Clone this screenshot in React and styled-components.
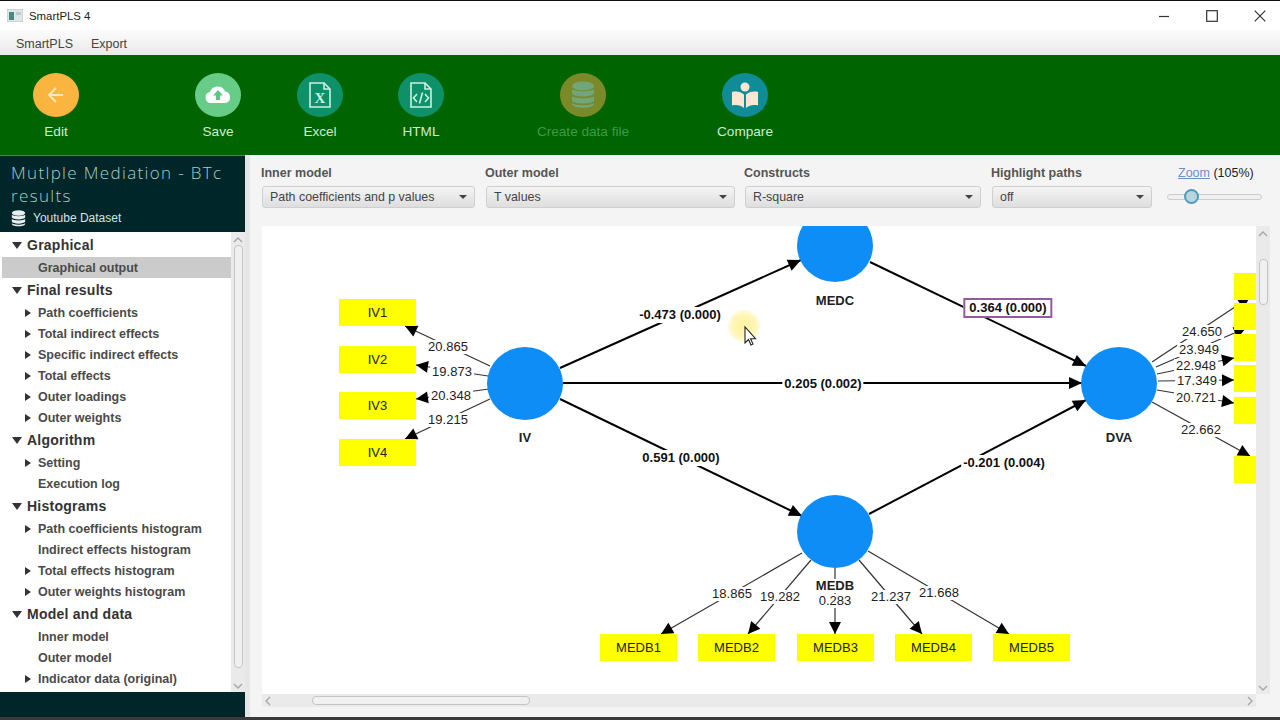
import React from 'react';
import styled, { createGlobalStyle } from 'styled-components';

const Global = createGlobalStyle`
  html, body { margin: 0; padding: 0; background: #f4f4f4; }
  body { font-family: "Liberation Sans", Arial, sans-serif; overflow: hidden; }
  * { box-sizing: border-box; }
`;

const Page = styled.div`
  width: 1280px; height: 720px; display: flex; flex-direction: column;
  border-top: 1px solid #111; overflow: hidden; background: #f4f4f4;
`;
const TitleBar = styled.div`
  height: 29px; flex: none; background: #fff; display: flex; align-items: center;
  padding-left: 7px; font-size: 11.4px; color: #222;
`;
const AppIcon = styled.svg`width: 16px; height: 13px; margin-right: 6px;`;
const TitleText = styled.span`flex: 1;`;
const WinButton = styled.button`
  width: ${p => p.$w || 48}px; height: 29px; border: 0; background: none; padding: 0 0 0 ${p => p.$pl || 0}px;
  display: flex; align-items: center; justify-content: center; color: #333;
`;
const MenuBar = styled.div`
  height: 25px; flex: none; display: flex; align-items: center; gap: 18px; padding: 2px 0 0 16px;
  font-size: 12.5px; color: #444;
  background: linear-gradient(#fcfcfc, #e9e9e9);
`;
const Toolbar = styled.div`
  height: 100px; flex: none; background: #006400; display: flex; padding: 18px 0 0 6px;
`;
const ToolItem = styled.div`
  width: 100px; margin-left: ${p => p.$gap || 0}px; display: flex; flex-direction: column; align-items: center;
  font-size: 13.6px; white-space: nowrap; color: ${p => (p.$disabled ? '#3f9a46' : '#cdeccd')};
`;
const ToolCircle = styled.div`
  width: 46px; height: 44px; border-radius: 50%; background: ${p => p.$bg}; flex: none;
  display: flex; align-items: center; justify-content: center; margin-bottom: 7px;
`;
const Body = styled.div`flex: 1; min-height: 0; display: flex;`;
const Sidebar = styled.div`
  width: 245px; flex: none; background: #01262a; display: flex; flex-direction: column; border-top: 1px solid #3d8a4d;
`;
const SideHead = styled.div`height: 76px; flex: none; padding: 5px 0 0 11px; color: #a6cdc8;`;
const SideTitle = styled.div`
  font-family: "Open Sans", sans-serif; font-size: 17px; line-height: 23px; letter-spacing: 1.35px; width: 233px; font-weight: 300;
`;
const Dataset = styled.div`
  display: flex; align-items: center; gap: 7px; color: #d5e3e3; font-size: 12px; height: 22px;
  svg { display: block; }
`;
const TreeWrap = styled.div`height: 460px; flex: none; background: #fff; display: flex;`;
const Tree = styled.div`width: 231px; flex: none; padding: 1px 0 0 2px;`;
const Head = styled.div`
  height: 24px; display: flex; align-items: center; padding-left: 10px; gap: 5px;
  font-size: 14px; font-weight: 700; color: #333; letter-spacing: .25px;
`;
const Item = styled.div`
  height: 21px; display: flex; align-items: center; font-size: 12.5px; font-weight: 700; color: #4a4a4a;
  padding-left: ${p => (p.$arrow ? 22 : 36)}px; gap: 6px;
  background: ${p => (p.$active ? '#cbcbcb' : 'transparent')};
`;
const Down = styled.span`width: 0; height: 0; border: 5px solid transparent; border-top: 7px solid #333; border-bottom: 0;`;
const Right = styled.span`width: 0; height: 0; border: 4px solid transparent; border-left: 6px solid #333; border-right: 0; margin-left: 1px; margin-right: 1px;`;
const VTrack = styled.div`
  width: 14px; flex: none; background: #eaeaea; position: relative; display: flex; flex-direction: column;
  align-items: center; color: #aaa; font-size: 0;
`;
const Chev = styled.svg`width: ${p => p.$w || 10}px; height: ${p => p.$h || 6}px; flex: none; margin: ${p => p.$m};`;
const VThumb = styled.div`
  width: 9px; height: ${p => p.$h}px; margin-top: ${p => p.$top}px; flex: none;
  background: #f0f0f0; border: 1px solid #c4c4c4; border-radius: 4px;
`;
const SideFoot = styled.div`flex: 1;`;
const Gutter = styled.div`width: 5px; flex: none; background: #e6e6e6;`;
const Main = styled.div`flex: 1; min-width: 0; padding-left: 12px; display: flex; flex-direction: column;`;
const Controls = styled.div`height: 71px; flex: none; display: flex; padding-top: 10px;`;
const Control = styled.div`width: ${p => p.$w}px; margin-right: ${p => p.$mr}px; flex: none;`;
const CtlLabel = styled.div`font-size: 12.5px; font-weight: 700; color: #555; height: 21px; line-height: 17px; margin-left: -1px;`;
const Select = styled.div`
  height: 22px; border: 1px solid #cfcfcf; border-radius: 3px; display: flex; align-items: center;
  justify-content: space-between; padding: 0 7px; font-size: 12.4px; color: #444;
  background: linear-gradient(#f4f4f4, #dedede);
`;
const Caret = styled.span`width: 0; height: 0; border: 4px solid transparent; border-top: 4px solid #444; border-bottom: 0;`;
const ZoomBox = styled.div`width: 95px; margin-left: 3px; flex: none;`;
const ZoomLabel = styled.div`font-size: 12.5px; color: #222; padding-left: 11px; height: 21px; line-height: 17px; white-space: nowrap;`;
const ZoomLink = styled.span`color: #6f8fc4; text-decoration: underline;`;
const Slider = styled.div`height: 6px; margin-top: 8px; border: 1px solid #ccc; border-radius: 3px; background: #f0f0f0; position: relative;`;
const Knob = styled.div`
  position: absolute; left: 16px; top: -6px; width: 15px; height: 15px; border-radius: 50%;
  background: #b8d4de; border: 2px solid #4d9cb8;
`;
const Work = styled.div`display: grid; grid-template-columns: 994px 14px; grid-template-rows: 468px 13px;`;
const Canvas = styled.div`position: relative; overflow: hidden; background: #fff;`;
const Edges = styled.svg`position: absolute; inset: 0; width: 994px; height: 468px;`;
const Placed = styled.div.attrs(p => ({ style: { left: p.$x - 262, top: p.$y - 226 } }))`position: absolute;`;
const Circle = styled(Placed)`width: 76px; height: 73px; margin: -36.500px 0 0 -38px; border-radius: 50%; background: #0d8df5;`;
const Rect = styled(Placed).attrs(p => ({ style: { left: p.$x - 262, top: p.$y - 226, width: p.$w || 77 } }))`
  height: 27px; background: #ffff00; display: flex; align-items: center; justify-content: center;
  font-size: 13px; color: #222;
`;
const NodeName = styled(Placed)`transform: translate(-50%, -50%); font-size: 13px; font-weight: 700; color: #222; line-height: 14px; background: #fff;`;
const Weight = styled(Placed)`
  transform: translate(-50%, -50%); margin-top: 1px; font-size: 13px; color: #222; line-height: 14px; background: #fff; padding: 0 2px; white-space: nowrap;
`;
const Path = styled(Weight)`
  font-weight: 700; color: #111; padding: 1px 2px;
  ${p => p.$boxed && 'margin-top: 0; border: 2px solid #95599f; padding: 0 4px; height: 20px; line-height: 16px;'}
`;
const Pointer = styled.svg`position: absolute; left: 464px; top: 83px; width: 36px; height: 40px;`;
const HTrack = styled.div`background: #eaeaea; padding: 0 3px; display: flex; align-items: center;`;
const HThumb = styled.div`width: 218px; height: 9px; margin-left: 41px; background: #f0f0f0; border: 1px solid #c4c4c4; border-radius: 4px;`;
const BottomEdge = styled.div`height: 3px; flex: none; background: #3a3a3a;`;

const IconBack = () => (
  <svg width="20" height="20" viewBox="0 0 20 20" fill="none" stroke="#ffe9c0" strokeWidth="2"><path d="M17 10H3M10 3l-7 7 7 7" /></svg>
);
const IconCloud = () => (
  <svg width="28" height="20" viewBox="0 0 28 20"><path fill="#fff" d="M7 18a5.500 5.500 0 0 1-1-10.900A8 8 0 0 1 21 6.500a5.800 5.800 0 0 1 0 11.500z" /><path fill="#5fc585" d="M14 5l5 5.500h-3V15h-4v-4.500H9z" /></svg>
);
const FileShape = ({ children }) => (
  <svg width="24" height="26" viewBox="0 0 24 26" fill="none" stroke="#c9f2e4" strokeWidth="1.600">
    <path d="M2 1h14l6 6v18H2z" /><path d="M16 1v6h6" />{children}
  </svg>
);
const IconExcel = () => (
  <FileShape><text x="12" y="21" textAnchor="middle" fontFamily="Liberation Serif, serif" fontWeight="700" fontSize="15" fill="#c9f2e4" stroke="none">X</text></FileShape>
);
const IconHtml = () => (
  <FileShape><path d="M8 12l-3.500 4 3.500 4M16 12l3.500 4-3.500 4M13.500 10.500l-3 11" /></FileShape>
);
const IconDb = ({ c = '#6fa67a', w = 24, h = 28 }) => (
  <svg width={w} height={h} viewBox="0 0 24 28" fill={c}>
    <ellipse cx="12" cy="5" rx="11" ry="4.500" />
    <path d="M1 8c2 3 20 3 22 0v4.500c-2 4-20 4-22 0zM1 15c2 3 20 3 22 0v4.500c-2 4-20 4-22 0zM1 22c2 3 20 3 22 0v1c-1 5-21 5-22 0z" />
  </svg>
);
const IconReader = () => (
  <svg width="28" height="28" viewBox="0 0 28 28" fill="#fce6d2">
    <circle cx="14" cy="6" r="4.500" />
    <path d="M1 11c5-1 9 0 12 2.500V27c-3-2.500-7-3.500-12-2.500zM27 11c-5-1-9 0-12 2.500V27c3-2.500 7-3.500 12-2.500z" />
  </svg>
);

const TreeData = [
  ['h', 'Graphical'], ['i', 'Graphical output', 0, 1],
  ['h', 'Final results'], ['a', 'Path coefficients'], ['a', 'Total indirect effects'], ['a', 'Specific indirect effects'], ['a', 'Total effects'], ['a', 'Outer loadings'], ['a', 'Outer weights'],
  ['h', 'Algorithm'], ['a', 'Setting'], ['i', 'Execution log'],
  ['h', 'Histograms'], ['a', 'Path coefficients histogram'], ['i', 'Indirect effects histogram'], ['a', 'Total effects histogram'], ['a', 'Outer weights histogram'],
  ['h', 'Model and data'], ['i', 'Inner model'], ['i', 'Outer model'], ['a', 'Indicator data (original)'],
];

const inner = [
  [560, 368, 801, 260], [563, 383, 1082, 383], [560, 399, 802, 516], [870, 262, 1086, 366], [869, 514, 1086, 400],
];
const outer = [
  [490, 366, 405, 326], [488, 376, 416, 365], [489, 389, 416, 399], [490, 399, 405, 439],
  [802, 553, 661, 634], [811, 560, 748, 634], [835, 568, 835, 634], [859, 560, 922, 634], [868, 551, 1009, 634],
  [1152, 362, 1250, 297], [1156, 367, 1246, 328], [1157, 374, 1234, 358], [1158, 381, 1234, 380], [1157, 390, 1234, 403], [1152, 402, 1250, 456],
];
const head = ([x1, y1, x2, y2], len, hw) => {
  const d = Math.hypot(x2 - x1, y2 - y1), ux = (x2 - x1) / d, uy = (y2 - y1) / d;
  const bx = x2 - ux * len, by = y2 - uy * len;
  return `${x2},${y2} ${bx - uy * hw},${by + ux * hw} ${bx + uy * hw},${by - ux * hw}`;
};

const rects = [
  ['IV1', 339, 299], ['IV2', 339, 346], ['IV3', 339, 392], ['IV4', 339, 439],
  ['MEDB1', 600, 634], ['MEDB2', 698, 634], ['MEDB3', 797, 634], ['MEDB4', 895, 634], ['MEDB5', 993, 634],
];
const sideRects = [273, 303, 334, 365, 397, 456];
const weights = [
  ['20.865', 448, 346], ['19.873', 452, 371], ['20.348', 451, 395], ['19.215', 448, 419],
  ['18.865', 732, 593], ['19.282', 780, 596], ['0.283', 835, 600], ['21.237', 891, 596], ['21.668', 939, 592],
  ['24.650', 1202, 331], ['23.949', 1199, 349], ['22.948', 1196, 365], ['17.349', 1197, 380], ['20.721', 1196, 397], ['22.662', 1201, 429],
];
const paths = [
  ['-0.473 (0.000)', 680, 314], ['0.205 (0.002)', 823, 383], ['0.591 (0.000)', 681, 457], ['-0.201 (0.004)', 1004, 462],
];

const stroke = { fill: 'none', stroke: '#a5a5a5', strokeWidth: 1.3 };
const Up = () => <Chev $m="5px 0 0" viewBox="0 0 10 6" {...stroke}><path d="M1 5l4-4 4 4" /></Chev>;
const Dn = () => <Chev $m="auto 0 3px" viewBox="0 0 10 6" {...stroke}><path d="M1 1l4 4 4-4" /></Chev>;
const Lf = () => <Chev $w={6} $h={10} $m="0" viewBox="0 0 6 10" {...stroke}><path d="M5 1L1 5l4 4" /></Chev>;
const Rt = () => <Chev $w={6} $h={10} $m="0 0 0 auto" viewBox="0 0 6 10" {...stroke}><path d="M1 1l4 4-4 4" /></Chev>;

export default function App() {
  return (
    <Page>
      <Global />
      <TitleBar>
        <AppIcon viewBox="0 0 16 13"><rect width="16" height="13" fill="#dfe6e6" stroke="#aab" strokeWidth=".6" /><rect x="2" y="3" width="5" height="8" fill="#4a8a80" /><rect x="9" y="3" width="5" height="3" fill="#bcc" /></AppIcon>
        <TitleText>SmartPLS 4</TitleText>
        <WinButton aria-label="minimise"><svg width="12" height="12"><path d="M1 6.500h10" stroke="#333" strokeWidth="1.200" /></svg></WinButton>
        <WinButton aria-label="maximise"><svg width="12" height="12"><rect x=".7" y=".7" width="10.600" height="10.600" fill="none" stroke="#333" strokeWidth="1.200" /></svg></WinButton>
        <WinButton aria-label="close" $w={44} $pl={4}><svg width="12" height="12"><path d="M.7.7l10.600 10.600M11.300.7L.7 11.300" stroke="#333" strokeWidth="1.200" /></svg></WinButton>
      </TitleBar>
      <MenuBar><span>SmartPLS</span><span>Export</span></MenuBar>
      <Toolbar>
        <ToolItem><ToolCircle $bg="#f9b53f"><IconBack /></ToolCircle>Edit</ToolItem>
        <ToolItem $gap={62}><ToolCircle $bg="#66cc88"><IconCloud /></ToolCircle>Save</ToolItem>
        <ToolItem $gap={2}><ToolCircle $bg="#0e9068"><IconExcel /></ToolCircle>Excel</ToolItem>
        <ToolItem $gap={1}><ToolCircle $bg="#0e9068"><IconHtml /></ToolCircle>HTML</ToolItem>
        <ToolItem $gap={62} $disabled><ToolCircle $bg="#7b8a28"><IconDb /></ToolCircle>Create data file</ToolItem>
        <ToolItem $gap={62}><ToolCircle $bg="#0f8c96"><IconReader /></ToolCircle>Compare</ToolItem>
      </Toolbar>
      <Body>
        <Sidebar>
          <SideHead>
            <SideTitle>Mutlple Mediation - BTc results</SideTitle>
            <Dataset><IconDb c="#e6eeee" w={15} h={17} />Youtube Dataset</Dataset>
          </SideHead>
          <TreeWrap>
            <Tree>
              {TreeData.map(([k, t, , act]) =>
                k === 'h' ? <Head key={t}><Down />{t}</Head>
                  : <Item key={t} $arrow={k === 'a'} $active={!!act}>{k === 'a' && <Right />}{t}</Item>)}
            </Tree>
            <VTrack><Up /><VThumb $top={2} $h={423} /><Dn /></VTrack>
          </TreeWrap>
          <SideFoot />
        </Sidebar>
        <Gutter />
        <Main>
          <Controls>
            <Control $w={213} $mr={11}><CtlLabel>Inner model</CtlLabel><Select>Path coefficients and p values<Caret /></Select></Control>
            <Control $w={249} $mr={10}><CtlLabel>Outer model</CtlLabel><Select>T values<Caret /></Select></Control>
            <Control $w={236} $mr={11}><CtlLabel>Constructs</CtlLabel><Select>R-square<Caret /></Select></Control>
            <Control $w={160} $mr={12}><CtlLabel>Highlight paths</CtlLabel><Select>off<Caret /></Select></Control>
            <ZoomBox><ZoomLabel><ZoomLink>Zoom</ZoomLink> (105%)</ZoomLabel><Slider><Knob /></Slider></ZoomBox>
          </Controls>
          <Work>
            <Canvas>
              <Edges viewBox="262 226 994 468">
                {inner.map(e => (
                  <g key={e.join()}>
                    <line x1={e[0]} y1={e[1]} x2={e[2]} y2={e[3]} stroke="#000" strokeWidth="2" />
                    <polygon points={head(e, 13, 6)} fill="#000" />
                  </g>
                ))}
                {outer.map(e => (
                  <g key={e.join()}>
                    <line x1={e[0]} y1={e[1]} x2={e[2]} y2={e[3]} stroke="#333" strokeWidth="1.200" />
                    <polygon points={head(e, 12, 6)} fill="#000" />
                  </g>
                ))}
              </Edges>
              <Circle $x={525} $y={383} />
              <Circle $x={835} $y={245} />
              <Circle $x={835} $y={531} />
              <Circle $x={1119} $y={383} />
              {rects.map(([t, x, y]) => <Rect key={t} $x={x} $y={y}>{t}</Rect>)}
              {sideRects.map(y => <Rect key={y} $x={1234} $y={y} $w={23} />)}
              {weights.map(([t, x, y]) => <Weight key={t} $x={x} $y={y}>{t}</Weight>)}
              {paths.map(([t, x, y]) => <Path key={t} $x={x} $y={y}>{t}</Path>)}
              <Path $boxed $x={1008} $y={308}>0.364 (0.000)</Path>
              <NodeName $x={525} $y={438}>IV</NodeName>
              <NodeName $x={835} $y={301}>MEDC</NodeName>
              <NodeName $x={835} $y={586}>MEDB</NodeName>
              <NodeName $x={1119} $y={438}>DVA</NodeName>
              <Pointer viewBox="0 0 36 40">
                <defs>
                  <radialGradient id="glow">
                    <stop offset="0" stopColor="#fff3a0" />
                    <stop offset=".7" stopColor="#fff6b5" />
                    <stop offset="1" stopColor="#fffbe0" />
                  </radialGradient>
                </defs>
                <circle cx="18" cy="17" r="16" fill="url(#glow)" />
                <path d="M19 18v16l3.500-3.500 2.500 5.500 2-1-2.500-5.300h5z" fill="#fff" stroke="#222" strokeWidth="1.100" />
              </Pointer>
            </Canvas>
            <VTrack><Up /><VThumb $top={22} $h={46} /><Dn /></VTrack>
            <HTrack><Lf /><HThumb /><Rt /></HTrack>
            <div />
          </Work>
        </Main>
      </Body>
      <BottomEdge />
    </Page>
  );
}
